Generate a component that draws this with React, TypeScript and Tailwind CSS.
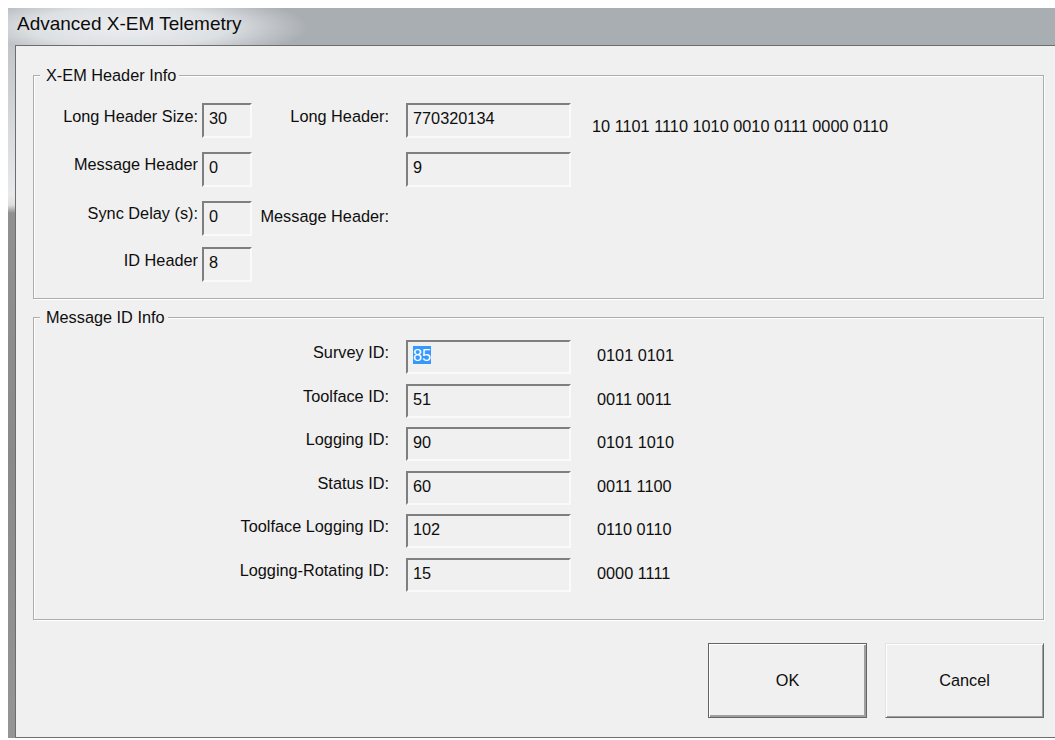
import { ReactNode } from "react";

const font = "font-['Liberation_Sans',Arial,sans-serif]";

function Field({
  value,
  className = "",
  selected = false,
  tall = true,
}: {
  value: string;
  className?: string;
  selected?: boolean;
  tall?: boolean;
}) {
  return (
    <div
      className={`${tall ? "h-[35px]" : "h-[34px]"} flex-none border-2 border-t-[#7f7f7f] border-l-[#7f7f7f] border-r-[#fafafa] border-b-[#fafafa] bg-[#f0f0f0] pl-[5px] pt-[4px] leading-[18px] ${className}`}
    >
      <span className={selected ? "bg-[#3399ff] text-white" : ""}>{value}</span>
    </div>
  );
}

function GroupBox({
  title,
  className = "",
  children,
}: {
  title: string;
  className?: string;
  children: ReactNode;
}) {
  return (
    <div
      className={`relative w-[1011px] border border-[#adadad] shadow-[inset_1px_1px_0_#ffffff,1px_1px_0_#ffffff] ${className}`}
    >
      <span className="absolute left-[6px] top-[-10px] bg-[#f0f0f0] pl-[6px] pr-[3px] leading-[18px]">
        {title}
      </span>
      {children}
    </div>
  );
}

const idRows = [
  { label: "Survey ID:", value: "85", bits: "0101 0101", selected: true },
  { label: "Toolface ID:", value: "51", bits: "0011 0011" },
  { label: "Logging ID:", value: "90", bits: "0101 1010" },
  { label: "Status ID:", value: "60", bits: "0011 1100" },
  { label: "Toolface Logging ID:", value: "102", bits: "0110 0110" },
  { label: "Logging-Rotating ID:", value: "15", bits: "0000 1111" },
];

export default function App() {
  return (
    <div className={`h-[740px] w-[1055px] overflow-hidden bg-white ${font} text-[16.3px] text-[#0e0e0e]`}>
      <div className="ml-[8px] mt-[8px] flex w-[1060px] flex-col">
        {/* caption */}
        <div className="h-[37px] bg-[radial-gradient(ellipse_180px_36px_at_120px_19px,#eceef0_0%,#dde0e3_55%,#a9aeb3_100%)] pl-[9px] pt-[5px] text-[19px] leading-[22px] text-[#0c0c0c]">
          Advanced X-EM Telemetry
        </div>

        <div className="flex">
          {/* left frame edge */}
          <div className="w-[7px] flex-none bg-[linear-gradient(to_bottom,#c1c5c9_0px,#e8e9ea_150px,#dedede_160px,#909090_168px,#8a8a8a_60%,#959595_100%)]" />

          {/* client area */}
          <div className="flex h-[693px] flex-1 flex-col border border-[#6d6d6d] bg-[#f0f0f0] pl-[17px] pt-[29px]">
            <GroupBox title="X-EM Header Info" className="pb-[16px] pt-[27px]">
              <div className="flex h-[35px]">
                <span className="w-[164px] pt-[1px] text-right">Long Header Size:</span>
                <Field value="30" className="ml-[4px] w-[50px]" />
                <span className="w-[137px] pt-[1px] text-right">Long Header:</span>
                <Field value="770320134" className="ml-[17px] w-[165px]" />
                <span className="ml-[21px] pt-[11px]">10 1101 1110 1010 0010 0111 0000 0110</span>
              </div>
              <div className="mt-[14px] flex h-[35px]">
                <span className="w-[164px] text-right">Message Header</span>
                <Field value="0" className="ml-[4px] w-[50px]" />
                <span className="w-[137px]" />
                <Field value="9" className="ml-[17px] w-[165px]" />
              </div>
              <div className="mt-[14px] flex h-[35px]">
                <span className="w-[164px] text-right">Sync Delay (s):</span>
                <Field value="0" className="ml-[4px] w-[50px]" />
                <span className="w-[137px] pt-[3px] text-right">Message Header:</span>
              </div>
              <div className="mt-[11px] flex h-[35px]">
                <span className="w-[164px] pt-[1px] text-right">ID Header</span>
                <Field value="8" className="ml-[4px] w-[50px]" />
              </div>
            </GroupBox>

            <GroupBox title="Message ID Info" className="mt-[18px] flex flex-col gap-[9.5px] pb-[27.5px] pt-[22px]">
              {idRows.map((r) => (
                <div key={r.label} className="flex h-[34px]">
                  <span className="w-[355px] text-right">{r.label}</span>
                  <Field value={r.value} selected={r.selected} tall={false} className="ml-[17px] w-[165px]" />
                  <span className="ml-[26px] pt-[3px]">{r.bits}</span>
                </div>
              ))}
            </GroupBox>

            <div className="mt-[23px] flex w-[1011px] justify-end gap-[18px]">
              <button className="h-[75px] w-[159px] border border-[#646464] bg-[#f0f0f0] shadow-[inset_1px_1px_0_#ffffff,inset_-2px_-2px_0_#9f9f9f]">
                OK
              </button>
              <button className="h-[75px] w-[159px] border border-t-[#e2e2e2] border-l-[#e2e2e2] border-r-[#6a6a6a] border-b-[#6a6a6a] bg-[#f0f0f0] shadow-[inset_1px_1px_0_#ffffff,inset_-1px_-1px_0_#a0a0a0]">
                Cancel
              </button>
            </div>
          </div>
        </div>
      </div>
    </div>
  );
}
